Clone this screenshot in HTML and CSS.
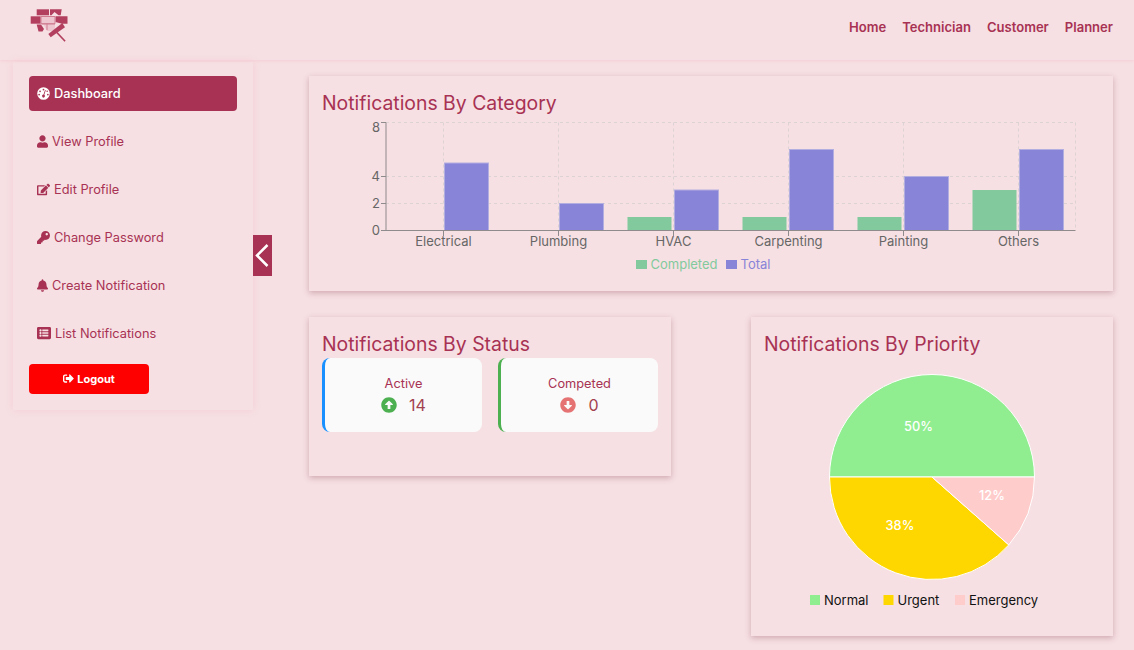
FILE: index.html
```html
<!DOCTYPE html>
<html lang="en">
  <head>
    <meta charset="UTF-8" />
    <meta name="viewport" content="width=device-width, initial-scale=1.0" />
    <title>Dashboard</title>
    <link rel="stylesheet" href="styles.css">
  </head>
  <body>
    <header class="topbar">
      <svg class="logo" viewBox="30 10 38 35" aria-label="Logo">
        <path d="M41 18.500H55V25.700H41ZM43.500 26.500H55V33H47Z" fill="#eec6cf" />
        <g fill="#b23f5e">
          <rect x="36.700" y="11.300" width="12.300" height="6" />
          <path d="M50 11.300H61.700L60.700 17.300H58.500L54.500 14L51.500 17.300H50Z" />
          <rect x="30.700" y="18.300" width="10" height="7.400" />
          <path d="M55.500 18.300H67.500V25.700H62L55.500 24Z" />
          <path d="M36.700 26.500H41L44 31L42.500 33.500H38.500Z" />
          <path d="M48.300 36L50.700 39.300L65 29.300L62.300 25Z" />
          <path d="M56 34.800L57.300 33.800L65.700 42.700L64.500 43.700Z" />
        </g>
        <path d="M41 18.500H55V25.700H41ZM47 25.700V32M41.500 26H55" fill="none" stroke="#d07c90" stroke-width="1" />
      </svg>
      <nav class="topnav">
        <a href="#">Home</a>
        <a href="#">Technician</a>
        <a href="#">Customer</a>
        <a href="#">Planner</a>
      </nav>
    </header>

    <div class="page">
      <aside class="sidebar">
        <ul class="menu">
          <li class="menu-item active">
            <svg class="ico ico-dash" viewBox="0 0 512 512">
              <circle cx="256" cy="256" r="248" fill="#fff" />
              <g fill="#a83253">
                <circle cx="256" cy="100" r="34" />
                <circle cx="120" cy="170" r="34" />
                <circle cx="84" cy="300" r="34" />
                <circle cx="428" cy="300" r="34" />
                <circle cx="400" cy="170" r="30" />
                <path d="M316 118L346 128L288 310A56 56 0 1 1 256 300Z" />
              </g>
            </svg>
            <span>Dashboard</span>
          </li>
          <li class="menu-item">
            <svg class="ico" viewBox="0 0 448 512"><path d="M224 256c70.700 0 128-57.300 128-128S294.700 0 224 0 96 57.300 96 128s57.300 128 128 128zm89.600 32h-16.700c-22.200 10.200-46.900 16-72.900 16s-50.600-5.800-72.900-16h-16.700C60.200 288 0 348.200 0 422.400V464c0 26.500 21.500 48 48 48h352c26.500 0 48-21.500 48-48v-41.600c0-74.200-60.200-134.400-134.400-134.400z" /></svg>
            <span>View Profile</span>
          </li>
          <li class="menu-item">
            <svg class="ico ico-wide" viewBox="0 0 576 512"><path d="M402.600 83.200l90.200 90.200c3.800 3.800 3.800 10 0 13.800L274.400 405.600l-92.800 10.300c-12.400 1.400-22.900-9.100-21.500-21.500l10.300-92.800L388.800 83.200c3.800-3.800 10-3.800 13.800 0zm162-22.900l-48.800-48.800c-15.200-15.200-39.900-15.200-55.200 0l-35.400 35.400c-3.800 3.800-3.800 10 0 13.800l90.200 90.200c3.800 3.800 10 3.800 13.800 0l35.400-35.400c15.200-15.300 15.200-40 0-55.200zM384 346.200V448H64V128h229.800c3.200 0 6.200-1.300 8.500-3.500l40-40c7.600-7.600 2.200-20.500-8.500-20.500H48C21.500 64 0 85.500 0 112v352c0 26.500 21.500 48 48 48h352c26.500 0 48-21.500 48-48V306.200c0-10.700-12.900-16-20.500-8.500l-40 40c-2.200 2.300-3.500 5.300-3.500 8.500z" /></svg>
            <span>Edit Profile</span>
          </li>
          <li class="menu-item">
            <svg class="ico ico-dash" viewBox="0 0 512 512"><path d="M512 176.001C512 273.203 433.202 352 336 352c-11.220 0-22.190-1.062-32.827-3.069l-24.012 27.014A23.999 23.999 0 0 1 261.223 384H224v40c0 13.255-10.745 24-24 24h-40v40c0 13.255-10.745 24-24 24H24c-13.255 0-24-10.745-24-24v-78.059c0-6.365 2.529-12.470 7.029-16.971l161.802-161.802C163.108 213.814 160 195.271 160 176 160 78.798 238.797.001 335.999 0 433.488-.001 512 78.511 512 176.001zM336 128c0 26.510 21.490 48 48 48s48-21.490 48-48-21.490-48-48-48-48 21.490-48 48z" /></svg>
            <span>Change Password</span>
          </li>
          <li class="menu-item">
            <svg class="ico" viewBox="0 0 448 512"><path d="M224 512c35.320 0 63.970-28.650 63.970-64H160.030c0 35.350 28.650 64 63.970 64zm215.390-149.710c-19.320-20.760-55.470-51.990-55.470-154.290 0-77.700-54.480-139.900-127.940-155.160V32c0-17.670-14.320-32-31.980-32s-31.980 14.330-31.980 32v20.840C118.560 68.100 64.080 130.300 64.080 208c0 102.300-36.150 133.530-55.470 154.290-6 6.450-8.660 14.160-8.610 21.710.110 16.400 12.980 32 32.100 32h383.800c19.120 0 32-15.600 32.100-32 .050-7.550-2.610-15.270-8.610-21.710z" /></svg>
            <span>Create Notification</span>
          </li>
          <li class="menu-item">
            <svg class="ico ico-list" viewBox="0 0 512 512"><path d="M464 480H48c-26.510 0-48-21.490-48-48V80c0-26.510 21.490-48 48-48h416c26.510 0 48 21.490 48 48v352c0 26.510-21.490 48-48 48zM128 120c-22.091 0-40 17.909-40 40s17.909 40 40 40 40-17.909 40-40-17.909-40-40-40zm0 96c-22.091 0-40 17.909-40 40s17.909 40 40 40 40-17.909 40-40-17.909-40-40-40zm0 96c-22.091 0-40 17.909-40 40s17.909 40 40 40 40-17.909 40-40-17.909-40-40-40zm288-136v-32c0-6.627-5.373-12-12-12H204c-6.627 0-12 5.373-12 12v32c0 6.627 5.373 12 12 12h200c6.627 0 12-5.373 12-12zm0 96v-32c0-6.627-5.373-12-12-12H204c-6.627 0-12 5.373-12 12v32c0 6.627 5.373 12 12 12h200c6.627 0 12-5.373 12-12zm0 96v-32c0-6.627-5.373-12-12-12H204c-6.627 0-12 5.373-12 12v32c0 6.627 5.373 12 12 12h200c6.627 0 12-5.373 12-12z" /></svg>
            <span>List Notifications</span>
          </li>
        </ul>
        <button class="logout">
          <svg class="ico-logout" viewBox="0 0 512 512"><path d="M497 273L329 441c-15 15-41 4.500-41-17v-96H152c-13.300 0-24-10.700-24-24v-96c0-13.300 10.700-24 24-24h136V88c0-21.400 25.900-32 41-17l168 168c9.300 9.400 9.300 24.600 0 34zM192 436v-40c0-6.600-5.400-12-12-12H96c-17.700 0-32-14.300-32-32V160c0-17.700 14.300-32 32-32h84c6.600 0 12-5.400 12-12V76c0-6.600-5.400-12-12-12H96c-53 0-96 43-96 96v192c0 53 43 96 96 96h84c6.600 0 12-5.400 12-12z" /></svg>
          Logout
        </button>
        <button class="collapse" aria-label="Collapse">
          <svg viewBox="0 0 19 41"><path d="M14.500 10L4 20.500L14.500 31" fill="none" stroke="#fff" stroke-width="2.500" /></svg>
        </button>
      </aside>

      <main class="content">
        <section class="card card-wide">
          <h2 class="card-title">Notifications By Category</h2>
          <!-- viewBox uses page coordinates so the numbers read straight off the screenshot -->
          <svg class="chart-bar" viewBox="322 117 777 160">
            <g class="grid">
              <path d="M386 122.500H1075.500M386 176.500H1075.500M386 203.500H1075.500" />
              <path d="M443.500 122.500V230.500M558.500 122.500V230.500M673.500 122.500V230.500M788.500 122.500V230.500M903.500 122.500V230.500M1018.500 122.500V230.500M1075.500 122.500V230.500" />
            </g>
            <g class="bar-green">
              <rect x="627.500" y="217" width="44" height="13.500" />
              <rect x="742.500" y="217" width="44" height="13.500" />
              <rect x="857.500" y="217" width="44" height="13.500" />
              <rect x="972.500" y="190" width="44" height="40.500" />
            </g>
            <g class="bar-blue">
              <rect x="444.500" y="163" width="44" height="67.500" />
              <rect x="559.500" y="203.500" width="44" height="27" />
              <rect x="674.500" y="190" width="44" height="40.500" />
              <rect x="789.500" y="149.500" width="44" height="81" />
              <rect x="904.500" y="176.500" width="44" height="54" />
              <rect x="1019.500" y="149.500" width="44" height="81" />
            </g>
            <path class="axis" d="M381 122.500H386V230.500H1075.500M381 176.500H386M381 203.500H386M381 230.500H386M443.500 230.500V236M558.500 230.500V236M673.500 230.500V236M788.500 230.500V236M903.500 230.500V236M1018.500 230.500V236" />
            <g class="tick-y">
              <text x="380" y="132">8</text>
              <text x="380" y="181">4</text>
              <text x="380" y="208">2</text>
              <text x="380" y="235">0</text>
            </g>
            <g class="tick-x">
              <text x="443.500" y="246">Electrical</text>
              <text x="558.500" y="246">Plumbing</text>
              <text x="673.500" y="246">HVAC</text>
              <text x="788.500" y="246">Carpenting</text>
              <text x="903.500" y="246">Painting</text>
              <text x="1018.500" y="246">Others</text>
            </g>
            <rect class="bar-green" x="636" y="260" width="11" height="9" />
            <text class="legend-green" x="650.500" y="269">Completed</text>
            <rect class="bar-blue" x="726" y="260" width="11" height="9" />
            <text class="legend-blue" x="740.500" y="269">Total</text>
          </svg>
        </section>

        <section class="card card-status">
          <h2 class="card-title">Notifications By Status</h2>
          <div class="stats">
            <div class="stat stat-blue">
              <div class="stat-label">Active</div>
              <div class="stat-value">
                <svg class="stat-ico up" viewBox="0 0 512 512"><path d="M8 256C8 119 119 8 256 8s248 111 248 248-111 248-248 248S8 393 8 256zm292 116V256h70.900c10.700 0 16.100-13 8.500-20.500L264.500 121.200c-4.700-4.700-12.200-4.700-16.900 0l-115 114.300c-7.600 7.600-2.200 20.500 8.500 20.500H212v116c0 6.600 5.400 12 12 12h64c6.600 0 12-5.400 12-12z" /></svg>
                <span>14</span>
              </div>
            </div>
            <div class="stat stat-green">
              <div class="stat-label">Competed</div>
              <div class="stat-value">
                <svg class="stat-ico down" viewBox="0 0 512 512"><path d="M504 256c0 137-111 248-248 248S8 393 8 256 119 8 256 8s248 111 248 248zM212 140v116h-70.900c-10.700 0-16.100 13-8.500 20.500l114.900 114.300c4.700 4.700 12.200 4.700 16.900 0l114.900-114.300c7.600-7.600 2.200-20.500-8.500-20.500H300V140c0-6.600-5.400-12-12-12h-64c-6.600 0-12 5.400-12 12z" /></svg>
                <span>0</span>
              </div>
            </div>
          </div>
        </section>

        <section class="card card-priority">
          <h2 class="card-title">Notifications By Priority</h2>
          <svg class="chart-pie" viewBox="764 358 336 264">
            <g class="slices">
              <path fill="#90ee90" d="M932 477H1034.500A102.500 102.500 0 0 0 829.500 477Z" />
              <path fill="#ffd700" d="M932 477H829.500A102.500 102.500 0 0 0 1008.800 544.900Z" />
              <path fill="#ffcccc" d="M932 477L1008.800 544.900A102.500 102.500 0 0 0 1034.500 477Z" />
            </g>
            <g class="pie-label">
              <text x="918.500" y="431">50%</text>
              <text x="900" y="530">38%</text>
              <text x="992" y="500">12%</text>
            </g>
            <rect x="810" y="595" width="10" height="10" fill="#90ee90" />
            <text class="pie-legend" x="824" y="605">Normal</text>
            <rect x="883.500" y="595" width="10" height="10" fill="#ffd700" />
            <text class="pie-legend" x="897.500" y="605">Urgent</text>
            <rect x="955" y="595" width="10" height="10" fill="#ffcccc" />
            <text class="pie-legend" x="969" y="605">Emergency</text>
          </svg>
        </section>
      </main>
    </div>
  </body>
</html>
```

FILE: styles.css
```css
* {
  padding: 0;
  margin: 0;
  box-sizing: border-box;
}
html {
  font-size: 12.8px;
  font-family: Inter, 'Liberation Sans', sans-serif;
  color: #a83253;
  background-color: #f6e0e3;
}
body {
  min-height: 100vh;
}
.topbar {
  height: 60px;
  padding: 0 21px 6px 30px;
  display: flex;
  justify-content: space-between;
  align-items: center;
  box-shadow: 0 1px 3px #f5cdd5;
}
.logo {
  width: 38px;
  height: 35px;
  margin-bottom: 4px;
}
.topnav {
  display: flex;
  gap: 16px;
}
.topnav a {
  color: #a83253;
  font-size: 13.05px;
  font-weight: 600;
  text-decoration: none;
}

.page {
  display: flex;
  align-items: flex-start;
  padding: 2px 21px 14px 13px;
  gap: 56px;
}
.sidebar {
  position: relative;
  flex: 0 0 240px;
  padding: 14px 16px 16px;
  box-shadow: 0 0 8px #f3cdd5;
}
.menu {
  list-style: none;
  display: flex;
  flex-direction: column;
  gap: 13px;
}
.menu-item {
  height: 35px;
  padding: 0 0 1px 8px;
  display: flex;
  align-items: center;
  gap: 4px;
  border-radius: 4px;
}
.menu-item.active {
  color: #fff;
  background-color: #a83253;
  font-weight: 500;
}
.ico {
  width: 11px;
  height: 13px;
  fill: #a83253;
}
.ico-wide {
  width: 13px;
}
.ico-dash {
  width: 13px;
}
.ico-list {
  width: 14px;
  height: 14px;
}
.logout {
  display: flex;
  justify-content: center;
  align-items: center;
  gap: 3px;
  width: 120px;
  height: 30px;
  margin-top: 13px;
  padding-bottom: 1px;
  border: none;
  border-radius: 4px;
  color: #fff;
  background-color: #ff0000;
  font: 700 11px Inter, 'Liberation Sans', sans-serif;
}
.ico-logout {
  width: 11px;
  height: 11px;
  fill: #fff;
}
.collapse {
  position: absolute;
  left: 100%;
  top: 173px;
  width: 19px;
  height: 41px;
  border: none;
  background-color: #a83253;
}
.collapse svg {
  display: block;
  width: 19px;
  height: 41px;
}

.content {
  flex: 1;
  margin-top: 14px;
  display: grid;
  grid-template-columns: 362px 362px;
  justify-content: space-between;
  row-gap: 26px;
  align-items: start;
}
.card {
  padding: 14px 13px;
  background-color: #f6e0e3;
  box-shadow: 0 2px 6px rgba(120, 40, 60, 0.3);
}
.card-wide {
  grid-column: 1 / 3;
  height: 215px;
}
.card-title {
  font-size: 19.4px;
  line-height: 26px;
  padding-bottom: 1px;
  font-weight: 400;
  color: #a83253;
}
.chart-bar {
  display: block;
  width: 777px;
  height: 160px;
}
.grid path {
  fill: none;
  stroke: #ddd2d4;
  stroke-dasharray: 3 3;
}
.axis {
  fill: none;
  stroke: #8f8a8b;
}
.bar-green {
  fill: #82ca9d;
}
.bar-blue {
  fill: #8884d8;
  stroke: #b3aee0;
  stroke-width: 1;
}
rect.bar-blue {
  stroke: none;
}
.tick-y text {
  font-size: 13px;
  fill: #666;
  text-anchor: end;
}
.tick-x text {
  font-size: 13px;
  fill: #666;
  text-anchor: middle;
}
.legend-green {
  font-size: 13px;
  fill: #82ca9d;
}
.legend-blue {
  font-size: 13px;
  fill: #8884d8;
}

.stats {
  display: flex;
  gap: 16px;
  margin-bottom: 30px;
}
.stat {
  flex: 0 0 160px;
  height: 74px;
  padding-top: 18px;
  border-left: 3px solid;
  border-radius: 8px;
  background-color: #fafafa;
  text-align: center;
}
.stat-blue {
  border-left-color: #1890ff;
}
.stat-green {
  border-left-color: #4caf50;
}
.stat-label {
  line-height: 16px;
  color: #a83253;
}
.stat-value {
  margin-top: 3px;
  display: flex;
  justify-content: center;
  align-items: center;
  gap: 12px;
  font-size: 16px;
  line-height: 20px;
  color: #a2414f;
}
.stat-ico {
  width: 16px;
  height: 16px;
}
.stat-ico.up {
  fill: #4caf50;
}
.stat-ico.down {
  fill: #e57373;
}

.card-priority {
  height: 319px;
}
.chart-pie {
  display: block;
  width: 336px;
  height: 264px;
}
.slices path {
  stroke: #fff;
  stroke-width: 1;
}
.pie-label text {
  font-size: 12.8px;
  font-weight: 500;
  fill: #fff;
  text-anchor: middle;
}
.pie-legend {
  font-size: 13px;
  fill: #111;
}
```
